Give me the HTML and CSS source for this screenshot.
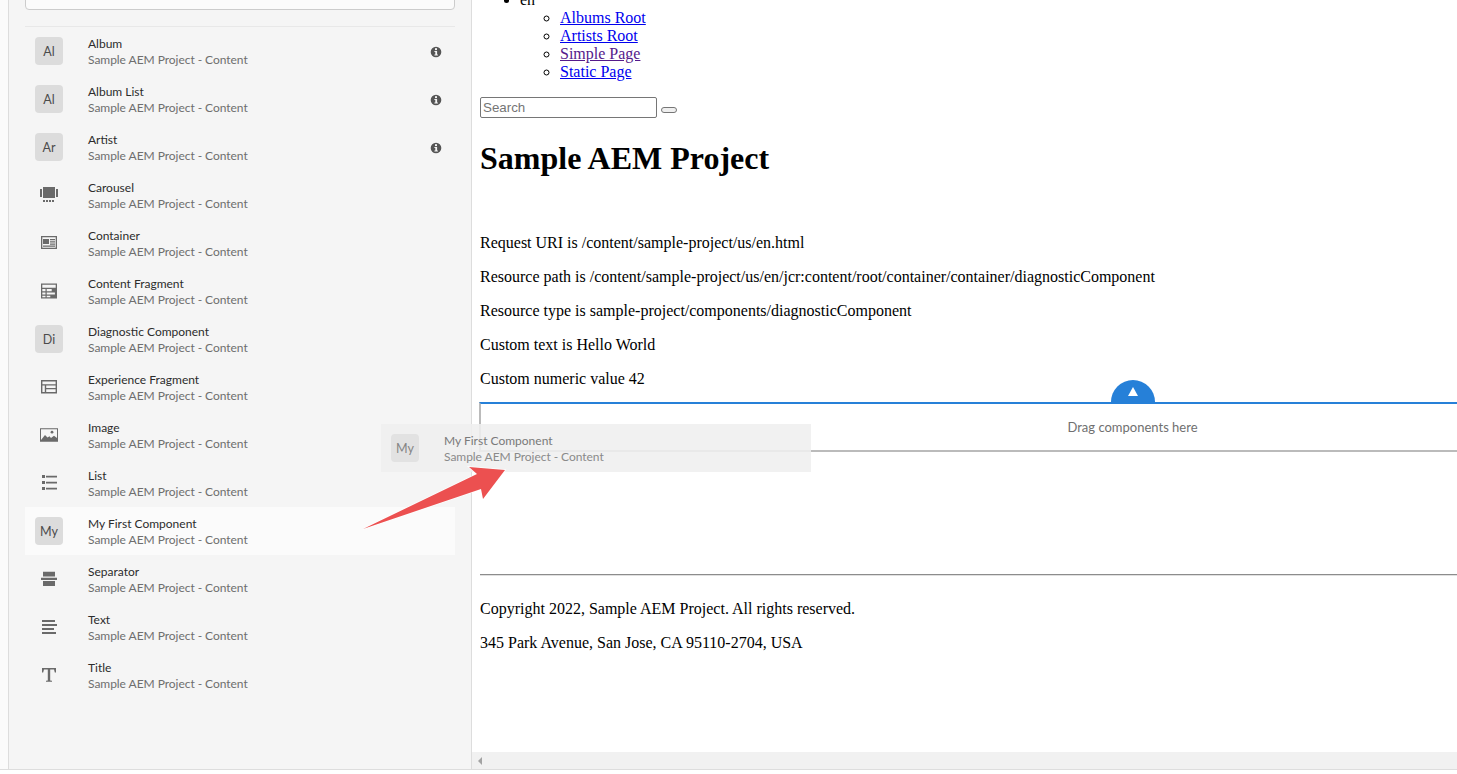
FILE: index.html
```html
<!DOCTYPE html>
<html lang="en">
<head>
    <meta charset="UTF-8">
    <meta name="viewport" content="width=device-width, initial-scale=1.0">
    <title>Sample AEM Project</title>
    <link rel="stylesheet" href="styles.css">
</head>
<body>

<div class="app">
    <div class="gutter"></div>

    <aside class="panel">
        <div class="panel-search"></div>
        <ul class="comp-list">
            <li class="comp-row">
                <span class="comp-abbr">Al</span>
                <div class="comp-text"><div class="comp-name">Album</div><div class="comp-group">Sample AEM Project - Content</div></div>
                <svg class="comp-info" viewBox="0 0 12 12"><circle cx="6" cy="6" r="5.3" fill="#555"/><rect x="5" y="2.2" width="2" height="1.9" fill="#f5f5f5"/><path d="M4.4 5h2.7v3.4h.8v1H4.4v-1h.9V6h-.9z" fill="#f5f5f5"/></svg>
            </li>
            <li class="comp-row">
                <span class="comp-abbr">Al</span>
                <div class="comp-text"><div class="comp-name">Album List</div><div class="comp-group">Sample AEM Project - Content</div></div>
                <svg class="comp-info" viewBox="0 0 12 12"><circle cx="6" cy="6" r="5.3" fill="#555"/><rect x="5" y="2.2" width="2" height="1.9" fill="#f5f5f5"/><path d="M4.4 5h2.7v3.4h.8v1H4.4v-1h.9V6h-.9z" fill="#f5f5f5"/></svg>
            </li>
            <li class="comp-row">
                <span class="comp-abbr">Ar</span>
                <div class="comp-text"><div class="comp-name">Artist</div><div class="comp-group">Sample AEM Project - Content</div></div>
                <svg class="comp-info" viewBox="0 0 12 12"><circle cx="6" cy="6" r="5.3" fill="#555"/><rect x="5" y="2.2" width="2" height="1.9" fill="#f5f5f5"/><path d="M4.4 5h2.7v3.4h.8v1H4.4v-1h.9V6h-.9z" fill="#f5f5f5"/></svg>
            </li>
            <li class="comp-row">
                <svg class="comp-icon" viewBox="0 0 18 18"><path d="M3 1h12v11H3zM0 3h2v8H0zM16 3h2v8h-2zM3 14h2v2H3zM6 14h2v2H6zM9 14h2v2H9zM12 14h2v2h-2z"/></svg>
                <div class="comp-text"><div class="comp-name">Carousel</div><div class="comp-group">Sample AEM Project - Content</div></div>
            </li>
            <li class="comp-row">
                <svg class="comp-icon" viewBox="0 0 18 18"><path fill-rule="evenodd" d="M1 2h16v13H1zM2.3 3.3v10.4h13.4V3.3z"/><path d="M3 5h6v5H3zM10 5h5v1.3h-5zM10 7.2h5v1.3h-5zM10 9.4h5v1.3h-5zM3 11.6h12v1.2H3z"/></svg>
                <div class="comp-text"><div class="comp-name">Container</div><div class="comp-group">Sample AEM Project - Content</div></div>
            </li>
            <li class="comp-row">
                <svg class="comp-icon" viewBox="0 0 18 18"><path fill-rule="evenodd" d="M1 1.5h16v15H1zM2.3 2.8v3h13.4v-3zM2.3 7v2.2h3.2V7zM6.7 7v2.2h5V7zM2.3 10.4v2.2h3.2v-2.2zM6.7 10.4v2.2h8.2v-2.2zM2.3 13.8v1.4h3.2v-1.4zM6.7 13.8v1.4h3.6v-1.4z"/></svg>
                <div class="comp-text"><div class="comp-name">Content Fragment</div><div class="comp-group">Sample AEM Project - Content</div></div>
            </li>
            <li class="comp-row">
                <span class="comp-abbr">Di</span>
                <div class="comp-text"><div class="comp-name">Diagnostic Component</div><div class="comp-group">Sample AEM Project - Content</div></div>
            </li>
            <li class="comp-row">
                <svg class="comp-icon" viewBox="0 0 18 18"><path fill-rule="evenodd" d="M1 2h16v13.4H1zM2.4 3.4v2.8h13.2V3.4zM2.4 7.4v6.6h2.4V7.4zM6.2 7.4V10h9.4V7.4zM6.2 11.2V14h9.4v-2.8z"/></svg>
                <div class="comp-text"><div class="comp-name">Experience Fragment</div><div class="comp-group">Sample AEM Project - Content</div></div>
            </li>
            <li class="comp-row">
                <svg class="comp-icon" viewBox="0 0 18 18"><path fill-rule="evenodd" d="M0 2.3h18v13.4H0zM1 3.3V14l4-5 2.5 2.5 2-1.3L11 12l3-2.2L17 12V3.3z"/><circle cx="12" cy="6.2" r="1.4"/></svg>
                <div class="comp-text"><div class="comp-name">Image</div><div class="comp-group">Sample AEM Project - Content</div></div>
            </li>
            <li class="comp-row">
                <svg class="comp-icon" viewBox="0 0 18 18"><path d="M2 1h3v3H2zM6 1.7h11v1.7H6zM2 7h3v3H2zM6 7.7h11v1.7H6zM2 13h3v3H2zM6 13.7h11v1.7H6z"/></svg>
                <div class="comp-text"><div class="comp-name">List</div><div class="comp-group">Sample AEM Project - Content</div></div>
            </li>
            <li class="comp-row comp-row-active">
                <span class="comp-abbr">My</span>
                <div class="comp-text"><div class="comp-name">My First Component</div><div class="comp-group">Sample AEM Project - Content</div></div>
            </li>
            <li class="comp-row">
                <svg class="comp-icon" viewBox="0 0 18 18"><path d="M3 1.7h12v4.8H3zM1 7.7h16V10H1zM3 11h12v5H3z"/></svg>
                <div class="comp-text"><div class="comp-name">Separator</div><div class="comp-group">Sample AEM Project - Content</div></div>
            </li>
            <li class="comp-row">
                <svg class="comp-icon" viewBox="0 0 18 18"><path d="M2 2h13v2H2zM2 6h15v2H2zM2 10h12v2H2zM2 14h14v2H2z"/></svg>
                <div class="comp-text"><div class="comp-name">Text</div><div class="comp-group">Sample AEM Project - Content</div></div>
            </li>
            <li class="comp-row">
                <svg class="comp-icon" viewBox="0 0 18 18"><path d="M2 2h14v4.6h-1.2L14 3.6h-3.8v10.8l1.8.3v1.1H6v-1.1l1.8-.3V3.6H4l-.8 3H2z"/></svg>
                <div class="comp-text"><div class="comp-name">Title</div><div class="comp-group">Sample AEM Project - Content</div></div>
            </li>
        </ul>
    </aside>

    <main class="frame">
        <div class="frame-view">
            <div class="page">
                <ul class="nav">
                    <li>en
                        <ul>
                            <li><a href="#albums">Albums Root</a></li>
                            <li><a href="#artists">Artists Root</a></li>
                            <li><a href="#simple" class="visited">Simple Page</a></li>
                            <li><a href="#static">Static Page</a></li>
                        </ul>
                    </li>
                </ul>

                <form class="search">
                    <input class="search-input" type="text" placeholder="Search">
                    <button class="search-btn" type="button"></button>
                </form>

                <h1>Sample AEM Project</h1>

                <p class="first">Request URI is /content/sample-project/us/en.html</p>
                <p>Resource path is /content/sample-project/us/en/jcr:content/root/container/container/diagnosticComponent</p>
                <p>Resource type is sample-project/components/diagnosticComponent</p>
                <p>Custom text is Hello World</p>
                <p>Custom numeric value 42</p>

                <div class="dropzone">
                    <div class="dropzone-handle"><span class="dropzone-arrow"></span></div>
                    Drag components here
                </div>

                <hr class="rule">

                <p class="copyright">Copyright 2022, Sample AEM Project. All rights reserved.</p>
                <p>345 Park Avenue, San Jose, CA 95110-2704, USA</p>
            </div>
        </div>
        <div class="hscroll"><span class="hscroll-left"></span></div>
    </main>
</div>

<!-- component being dragged -->
<div class="ghost">
    <span class="comp-abbr">My</span>
    <div class="comp-text"><div class="comp-name">My First Component</div><div class="comp-group">Sample AEM Project - Content</div></div>
</div>

<svg class="callout" width="1457" height="774" viewBox="0 0 1457 774"><polygon points="363,529 477,474 469,467 505,470 483,499 481,489" fill="#ec5050" stroke="#fff" stroke-opacity="0.8" stroke-width="1.5" paint-order="stroke"/></svg>

</body>
</html>
```

FILE: styles.css
```css
html, body {
    margin: 0;
    height: 100%;
    overflow: hidden;
    background: #fff;
}
.app {
    display: flex;
    height: 769px;
    border-bottom: 1px solid #ddd;
    overflow: hidden;
}
.gutter {
    width: 8px;
    flex: none;
    background: #fbfbfb;
}

/* side panel */
.panel {
    width: 430px;
    flex: none;
    padding: 0 16px;
    background: #f5f5f5;
    border-left: 1px solid #ddd;
    border-right: 1px solid #ddd;
    font-family: Lato, "Open Sans", sans-serif;
    font-size: 12px;
}
.panel-search {
    height: 32px;
    margin-top: -24px;
    background: #fbfbfb;
    border: 1px solid #ccc;
    border-radius: 4px;
}
.comp-list {
    list-style: none;
    margin: 16px 0 0;
    padding: 0;
    border-top: 1px solid #e8e8e8;
}
.comp-row {
    display: flex;
    align-items: center;
    height: 48px;
    padding-left: 10px;
}
.comp-row-active {
    background: #fbfbfb;
}
.comp-abbr {
    width: 28px;
    height: 28px;
    flex: none;
    display: flex;
    align-items: center;
    justify-content: center;
    background: #dcdcdc;
    border-radius: 4px;
    color: #4b4b4b;
    font-size: 12.5px;
}
.comp-icon {
    width: 18px;
    height: 18px;
    flex: none;
    margin: 0 5px;
    fill: #6a6a6a;
}
.comp-text {
    margin: 2px 0 0 25px;
    line-height: 16px;
    flex: 1;
}
.comp-name {
    color: #2c2c2c;
}
.comp-group {
    color: #6e6e6e;
    letter-spacing: -0.04px;
}
.comp-info {
    width: 12px;
    height: 12px;
    flex: none;
    margin: 2px 13px 0 0;
}

/* page frame */
.frame {
    flex: 1;
    min-width: 0;
    display: flex;
    flex-direction: column;
}
.frame-view {
    flex: 1;
    min-height: 0;
    overflow: hidden;
}
.page {
    width: 1304px;
    padding: 0 8px;
    margin-top: -9px;
    font-family: "Liberation Serif", serif;
    font-size: 16px;
    line-height: 18px;
    color: #000;
}
.nav {
    margin: 0 0 16px;
    padding-left: 40px;
}
.nav ul {
    margin: 0;
    padding-left: 40px;
}
.visited {
    color: #551a8b;
}
.search {
    height: 22px;
}
.search-input {
    width: 177px;
    height: 21px;
    box-sizing: border-box;
    padding: 1px 2px;
    border: 1px solid #767676;
    border-radius: 2px;
    font-family: "Liberation Sans", sans-serif;
    font-size: 13.33px;
}
.search-btn {
    width: 16px;
    height: 6px;
    padding: 0;
    background: #efefef;
    border: 1px solid #767676;
    border-radius: 3px;
}
h1 {
    margin: 21px 0 57px;
    font-size: 32px;
    line-height: 37px;
}
p {
    margin: 16px 0;
}
.first {
    margin-top: 0;
}
.dropzone {
    position: relative;
    box-sizing: border-box;
    height: 50px;
    margin: -2px 0 0 -1px;
    border-top: 2px solid #2680d8;
    border-left: 2px solid #bbb;
    border-bottom: 2px solid #bbb;
    display: flex;
    align-items: center;
    justify-content: center;
    font-family: Lato, "Open Sans", sans-serif;
    font-size: 13px;
    color: #707070;
}
.dropzone-handle {
    position: absolute;
    left: 50%;
    top: -24px;
    width: 44px;
    height: 22px;
    margin-left: -22px;
    background: #2680d8;
    border-radius: 22px 22px 0 0;
}
.dropzone-arrow {
    position: absolute;
    left: 17px;
    top: 7px;
    width: 0;
    height: 0;
    border-left: 5px solid transparent;
    border-right: 5px solid transparent;
    border-bottom: 9px solid #fff;
}
.rule {
    margin: 122px 0 0;
    border: 0;
    border-top: 1px solid #8c8c8c;
    border-bottom: 1px solid #e0e0e0;
}
.copyright {
    margin-top: 24px;
}
.hscroll {
    height: 17px;
    flex: none;
    background: #f1f1f1;
    display: flex;
    align-items: center;
    padding-left: 6px;
}
.hscroll-left {
    width: 0;
    height: 0;
    border-top: 4px solid transparent;
    border-bottom: 4px solid transparent;
    border-right: 4px solid #a3a3a3;
}

/* overlays */
.ghost {
    position: absolute;
    left: 381px;
    top: 424px;
    width: 420px;
    height: 48px;
    padding-left: 10px;
    display: flex;
    align-items: center;
    background: rgba(239, 239, 239, 0.88);
    font-family: Lato, "Open Sans", sans-serif;
    font-size: 12px;
}
.ghost .comp-abbr {
    background: #e2e2e2;
    color: #858585;
}
.ghost .comp-name {
    color: #7a7a7a;
}
.ghost .comp-group {
    color: #8a8a8a;
}
.callout {
    position: absolute;
    left: 0;
    top: 0;
    pointer-events: none;
}
```
